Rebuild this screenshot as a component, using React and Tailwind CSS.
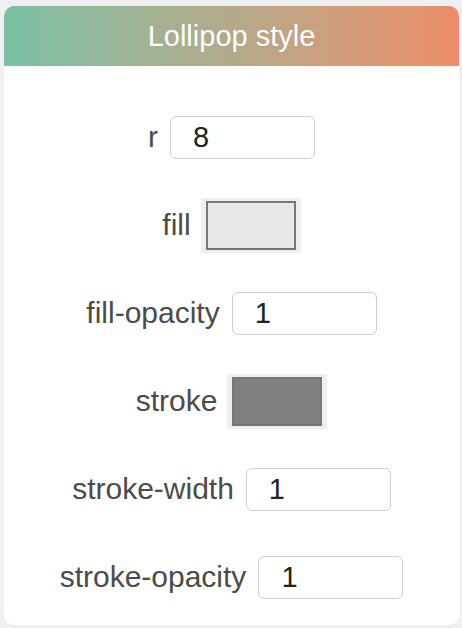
import React from "react";

const font = { fontFamily: '"Liberation Sans", Arial, sans-serif' };

function TextRow({ label, value }) {
  return (
    <div className="h-[88px] flex items-center justify-center gap-3">
      <span className="text-[30px] text-[#4b4b4b] leading-none">{label}</span>
      <div className="w-[145px] h-[43px] border-[1.5px] border-[#cfcfcf] rounded-[6px] bg-white flex items-center pl-[22px] text-[29px] text-[#222] leading-none">
        {value}
      </div>
    </div>
  );
}

function ColorRow({ label, color }) {
  return (
    <div className="h-[88px] flex items-center justify-center gap-[10px]">
      <span className="text-[30px] text-[#4b4b4b] leading-none">{label}</span>
      <div className="w-[100px] h-[55px] bg-[#efefef] px-[5px] py-[3px] flex">
        <div className="flex-1 border-2 border-[#777777]" style={{ background: color }} />
      </div>
    </div>
  );
}

export default function App() {
  return (
    <div className="w-[462px] h-[628px] bg-[#f0f0f0] pt-[6px] pl-[4px] pr-[3px] pb-[3px]" style={font}>
      <div className="w-[455px] h-[619px] rounded-[10px] overflow-hidden bg-white flex flex-col">
        <div className="h-[60px] bg-gradient-to-r from-[#79c0a5] via-[#b3a98a] to-[#ec8d69] flex items-center justify-center">
          <span className="text-white text-[29px] leading-none">Lollipop style</span>
        </div>
        <div className="flex flex-col pt-[27px]">
          <TextRow label="r" value="8" />
          <ColorRow label="fill" color="#e8e8e8" />
          <TextRow label="fill-opacity" value="1" />
          <ColorRow label="stroke" color="#808080" />
          <TextRow label="stroke-width" value="1" />
          <TextRow label="stroke-opacity" value="1" />
        </div>
      </div>
    </div>
  );
}
